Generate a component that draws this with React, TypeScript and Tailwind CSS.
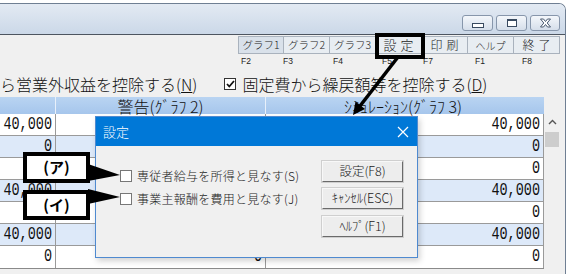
import React from "react";

const JP = "font-['Noto_Sans_CJK_JP','Noto_Sans',sans-serif]";
const MONO = "font-['Liberation_Mono',monospace]";

const tools = [
  { label: "グラフ1", cls: "text-[10.5px]" },
  { label: "グラフ2", cls: "text-[10.5px]" },
  { label: "グラフ3", cls: "text-[10.5px]" },
  { label: "設定", cls: "text-[13px] tracking-[4px] pl-[4px]" },
  { label: "印刷", cls: "text-[12px] tracking-[4px] pl-[4px]" },
  { label: "ヘルプ", cls: "text-[10px]" },
  { label: "終了", cls: "text-[12px] tracking-[4px] pl-[4px]" },
];

const keys = [
  { k: "F2", cls: "w-[42px]" },
  { k: "F3", cls: "w-[50px]" },
  { k: "F4", cls: "w-[49px]" },
  { k: "F5", cls: "w-[41px]" },
  { k: "F7", cls: "w-[52px]" },
  { k: "F1", cls: "w-[47px]" },
  { k: "F8", cls: "w-[30px]" },
];

// a: first column, b: 警告 column (mostly under the dialog), c: シミュレーション column
const rows = [
  { a: "40,000", b: "", c: "40,000", blue: false },
  { a: "0", b: "", c: "0", blue: true },
  { a: "", b: "", c: "0", blue: false },
  { a: "40,000", b: "", c: "40,000", blue: true },
  { a: "", b: "", c: "0", blue: false },
  { a: "40,000", b: "", c: "40,000", blue: true },
  { a: "0", b: "0", c: "0", blue: false },
];

function Num({ v }: { v: string }) {
  if (!v) return null;
  return (
    <span className={`${MONO} inline-block text-[13.5px] leading-none scale-y-[1.4] text-[#111]`}>
      {v}
    </span>
  );
}

function WinBtn({ children, w }: { children: React.ReactNode; w: string }) {
  return (
    <div
      className={`${w} h-[16px] rounded-[3px] border border-[#8796ab] bg-gradient-to-b from-[#f4f7fb] to-[#d5deea] flex items-center justify-center`}
    >
      {children}
    </div>
  );
}

function DlgButton({ children }: { children: React.ReactNode }) {
  return (
    <div className="w-[81px] h-[21px] bg-[#ededed] border border-t-[#f8f8f8] border-l-[#f8f8f8] border-r-[#6a6a6a] border-b-[#6a6a6a] shadow-[0_0_0_1px_#cfcfcf] flex items-center justify-center text-[12.5px] text-[#1a1a1a]">
      {children}
    </div>
  );
}

function Settings() {
  return (
    <div className="absolute left-[95px] top-[116px] w-[323px] h-[142px] border border-[#4f8ad0] bg-[#f0f0f0] shadow-[2px_3px_6px_rgba(0,0,0,0.18)] flex flex-col">
      <div className="h-[29px] bg-[#0078d7] flex items-center justify-between pl-[7px] pr-[8px]">
        <span className="text-white text-[13px]">設定</span>
        <svg width="12" height="12" viewBox="0 0 12 12">
          <path d="M1 1L11 11M11 1L1 11" stroke="#ffffff" strokeWidth="1.2" />
        </svg>
      </div>
      <div className="flex flex-1 pl-[24px]">
        <div className="flex flex-col gap-[11px] pt-[24px] w-[202px]">
          {["専従者給与を所得と見なす(S)", "事業主報酬を費用と見なす(J)"].map((t) => (
            <div key={t} className="flex items-center gap-[5px] h-[12px]">
              <span className="w-[12px] h-[12px] border border-[#777] bg-white shrink-0" />
              <span className="text-[12px] tracking-[0.25px] text-[#1a1a1a] whitespace-nowrap">{t}</span>
            </div>
          ))}
        </div>
        <div className="flex flex-col gap-[6px] pt-[15px]">
          <DlgButton>設定(F8)</DlgButton>
          <DlgButton>ｷｬﾝｾﾙ(ESC)</DlgButton>
          <div className="pt-[1px]">
            <DlgButton>ﾍﾙﾌﾟ(F1)</DlgButton>
          </div>
        </div>
      </div>
    </div>
  );
}

function Callout({ top, h, label }: { top: string; h: string; label: string }) {
  return (
    <div
      className={`absolute left-[23px] ${top} w-[67px] ${h} border-[4px] border-black bg-white flex items-center justify-center font-bold text-[15px] text-black`}
    >
      {label}
    </div>
  );
}

export default function App() {
  return (
    <div className={`${JP} font-light relative w-[574px] h-[274px] overflow-hidden bg-white`}>
      <div className="mt-[3px] w-[566px] h-[271px] border-t border-r border-[#6f7f93] rounded-tr-[7px] flex flex-col overflow-hidden">
        {/* title bar */}
        <div className="h-[31px] bg-gradient-to-b from-[#e3eaf3] to-[#cbd8e8] border-b border-[#4d5560] flex justify-end pt-[11px] pr-[5px] gap-[3px]">
          <WinBtn w="w-[31px]">
            <span className="w-[12px] h-[5px] border border-[#394a60] bg-white mt-[4px]" />
          </WinBtn>
          <WinBtn w="w-[31px]">
            <span className="w-[10px] h-[8px] border border-[#394a60] border-t-2 bg-white" />
          </WinBtn>
          <WinBtn w="w-[30px]">
            <svg width="13" height="10" viewBox="0 0 13 10">
              <path
                d="M1.5 1h3l2 2.5 2-2.5h3l-3.3 4 3.3 4h-3l-2-2.5-2 2.5h-3l3.3-4z"
                fill="#ffffff"
                stroke="#4a5a70"
                strokeWidth="1"
              />
            </svg>
          </WinBtn>
        </div>

        <div className="flex-1 bg-[#f0f0f0] flex flex-col">
          {/* toolbar */}
          <div className="flex pl-[238px] mt-[1px] h-[18px]">
            {tools.map((t, i) => (
              <div
                key={t.label}
                className={`w-[46px] h-[18px] flex items-center justify-center border border-[#a9b2bd] ${
                  i === 0 ? "bg-[#d9e1ea]" : "bg-[#e8edf2] border-l-0"
                } text-[#222] ${t.cls}`}
              >
                {t.label}
              </div>
            ))}
          </div>
          <div className="flex pl-[241px] h-[14px] items-center text-[8.5px] text-[#222] font-['Liberation_Sans',sans-serif]">
            {keys.map((k) => (
              <span key={k.k} className={k.cls}>
                {k.k}
              </span>
            ))}
          </div>

          {/* options */}
          <div className="h-[29px] flex items-center pt-[2px] text-[16px] text-[#111] whitespace-nowrap">
            <span>
              ら営業外収益を控除する(<span className="underline">N</span>)
            </span>
            <span className="ml-[27px] w-[12px] h-[12px] border border-[#333] bg-white flex items-center justify-center">
              <svg width="9" height="8" viewBox="0 0 9 8">
                <path d="M1 4l2.3 2.5L8 1" stroke="#111" strokeWidth="1.8" fill="none" />
              </svg>
            </span>
            <span className="ml-[6px]">
              固定費から繰戻額等を控除する(<span className="underline">D</span>)
            </span>
          </div>

          {/* table */}
          <div className="flex">
            <div className="w-[544px] border-b border-[#8a8a8a]">
              <div className="flex h-[17px] bg-gradient-to-b from-[#b9d4f2] to-[#a6c6ec] text-[16px] leading-none text-[#111]">
                <div className="w-[56px] border-r border-[#e8f0fa]" />
                <div className="w-[210px] border-r border-[#e8f0fa] flex items-center justify-center">
                  警告(ｸﾞﾗﾌ 2)
                </div>
                <div className="flex-1 flex items-center justify-center pr-[4px]">ｼﾐｭﾚｰｼｮﾝ(ｸﾞﾗﾌ 3)</div>
              </div>
              {rows.map((r, i) => (
                <div
                  key={i}
                  className={`flex h-[22px] border-b border-[#9a9a9a] last:border-b-0 ${
                    r.blue ? "bg-[#dde9f9]" : "bg-white"
                  }`}
                >
                  <div className="w-[56px] border-r border-[#9a9a9a] flex items-center justify-end pr-[3px]">
                    <Num v={r.a} />
                  </div>
                  <div className="w-[210px] border-r border-[#9a9a9a] flex items-center justify-end pr-[3px]">
                    <Num v={r.b} />
                  </div>
                  <div className="flex-1 border-r border-[#9a9a9a] flex items-center justify-end pr-[3px]">
                    <Num v={r.c} />
                  </div>
                </div>
              ))}
            </div>
            <div className="w-[16px] flex flex-col items-center pt-[22px]">
              <svg width="9" height="6" viewBox="0 0 9 6">
                <path d="M1 5l3.5-3.5L8 5" stroke="#555" strokeWidth="1.4" fill="none" />
              </svg>
              <div className="mt-[7px] w-[14px] h-[15px] bg-[#cdcdcd]" />
            </div>
          </div>
        </div>
      </div>

      {/* highlight around 設定 */}
      <div className="absolute left-[375px] top-[33px] w-[50px] h-[26px] border-[4px] border-black" />

      <Settings />

      <Callout top="top-[152px]" h="h-[31px]" label="(ア)" />
      <Callout top="top-[190px]" h="h-[30px]" label="(イ)" />

      <svg className="absolute left-0 top-0 pointer-events-none" width="574" height="274" viewBox="0 0 574 274">
        <line x1="398" y1="57" x2="360" y2="106" stroke="#000" strokeWidth="3.5" />
        <polygon points="353,115 365,109 355.5,101.5" fill="#000" />
        <polygon points="88,164 120,175 88,181" fill="#000" />
        <polygon points="88,189 120,197 88,204" fill="#000" />
      </svg>
    </div>
  );
}
